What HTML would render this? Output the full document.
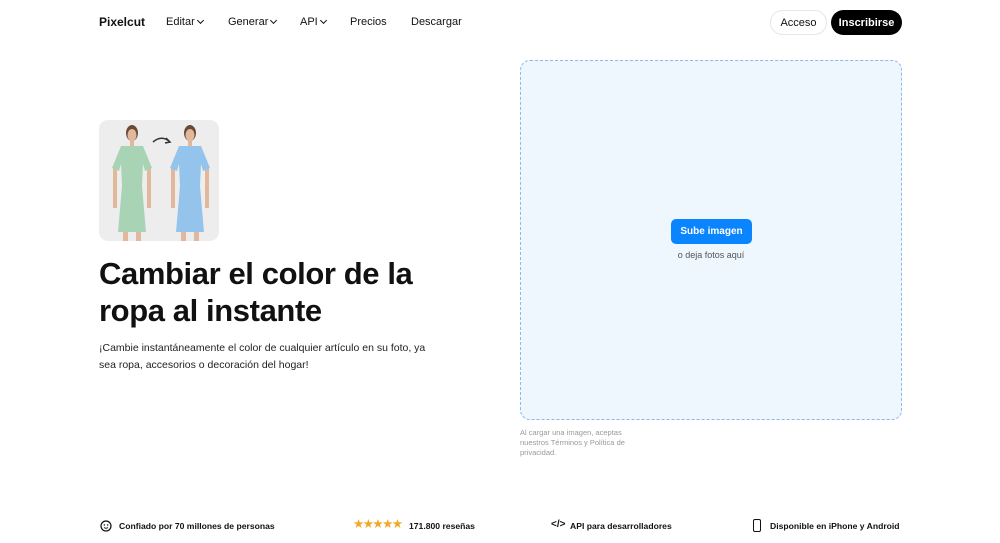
<!DOCTYPE html>
<html><head><meta charset="utf-8"><style>
*{margin:0;padding:0;box-sizing:border-box}
body{width:1000px;height:543px;background:#fff;font-family:"Liberation Sans",sans-serif;color:#111;position:relative;overflow:hidden}
.a{position:absolute;white-space:nowrap}
.nav{font-size:11px;color:#111}
.chev{display:inline-block;width:5px;height:5px;border-right:1px solid #111;border-bottom:1px solid #111;transform:rotate(45deg);margin-left:3px;position:relative;top:-2px}
.ft{font-size:8.6px;font-weight:bold;top:521px}
.btn{display:flex;align-items:center;justify-content:center}
</style></head><body>
<div class="a" style="left:99px;top:15px;font-size:12px;font-weight:bold">Pixelcut</div>
<div class="a nav" style="left:166px;top:16px">Editar<span class="chev"></span></div>
<div class="a nav" style="left:228px;top:16px">Generar<span class="chev"></span></div>
<div class="a nav" style="left:300px;top:16px">API<span class="chev"></span></div>
<div class="a nav" style="left:350px;top:16px">Precios</div>
<div class="a nav" style="left:411px;top:16px">Descargar</div>
<div class="a btn" style="left:770px;top:10px;width:57px;height:25px;border:1px solid #e6e6e6;border-radius:13px;font-size:11px">Acceso</div>
<div class="a btn" style="left:831px;top:10px;width:71px;height:25px;background:#000;color:#fff;border-radius:13px;font-size:11px;font-weight:bold">Inscribirse</div>

<div class="a" style="left:99px;top:120px;width:120px;height:121px;background:#ededed;border-radius:9px;overflow:hidden">
<svg width="120" height="121" viewBox="0 0 120 121">
<g>
<ellipse cx="33" cy="13" rx="6" ry="8" fill="#6b4a35"/><ellipse cx="33" cy="15" rx="4.5" ry="6" fill="#e2b89c"/>
<rect x="31" y="20" width="4" height="6" fill="#e2b89c"/>
<rect x="14" y="48" width="4" height="40" fill="#e2b89c"/><rect x="48" y="48" width="4" height="40" fill="#e2b89c"/>
<rect x="24" y="110" width="5" height="11" fill="#e2b89c"/><rect x="37" y="110" width="5" height="11" fill="#e2b89c"/>
<path d="M22 26 L44 26 L53 48 L46 51 L44 44 L43 66 L47 112 L19 112 L23 66 L22 44 L20 51 L13 48 Z" fill="#a8d3b5"/>
</g>
<g transform="translate(58,0)">
<ellipse cx="33" cy="13" rx="6" ry="8" fill="#6b4a35"/><ellipse cx="33" cy="15" rx="4.5" ry="6" fill="#e2b89c"/>
<rect x="31" y="20" width="4" height="6" fill="#e2b89c"/>
<rect x="14" y="48" width="4" height="40" fill="#e2b89c"/><rect x="48" y="48" width="4" height="40" fill="#e2b89c"/>
<rect x="24" y="110" width="5" height="11" fill="#e2b89c"/><rect x="37" y="110" width="5" height="11" fill="#e2b89c"/>
<path d="M22 26 L44 26 L53 48 L46 51 L44 44 L43 66 L47 112 L19 112 L23 66 L22 44 L20 51 L13 48 Z" fill="#94c3ec"/>
</g>
<path d="M54 22 Q62 15 70 21" stroke="#333" stroke-width="1.5" fill="none"/><path d="M67 18 L71 22 L66 23" stroke="#333" stroke-width="1.5" fill="none"/>
</svg></div>

<div class="a" style="left:99px;top:255px;font-size:31px;font-weight:bold;line-height:37px;letter-spacing:-0.4px">Cambiar el color de la<br>ropa al instante</div>
<div class="a" style="left:99px;top:340px;font-size:10.5px;line-height:17px;color:#222">¡Cambie instantáneamente el color de cualquier artículo en su foto, ya<br>sea ropa, accesorios o decoración del hogar!</div>

<div class="a" style="left:520px;top:60px;width:382px;height:360px;background:#eef6fe;border:1px dashed #8fb8e6;border-radius:10px"></div>
<div class="a btn" style="left:671px;top:219px;width:81px;height:25px;background:#0a84ff;border-radius:5px;color:#fff;font-size:10px;font-weight:bold">Sube imagen</div>
<div class="a" style="left:520px;width:382px;top:250px;text-align:center;font-size:9px;color:#555">o deja fotos aquí</div>
<div class="a" style="left:520px;top:428px;font-size:7.5px;line-height:10px;color:#999">Al cargar una imagen, aceptas<br>nuestros Términos y Política de<br>privacidad.</div>

<svg class="a" style="left:100px;top:520px" width="12" height="12" viewBox="0 0 12 12"><circle cx="6" cy="6" r="5" fill="none" stroke="#111" stroke-width="1.2"/><circle cx="4.3" cy="5" r=".7"/><circle cx="7.7" cy="5" r=".7"/><path d="M4 7.5 Q6 9 8 7.5" stroke="#111" fill="none"/></svg>
<div class="a ft" style="left:119px">Confiado por 70 millones de personas</div>
<div class="a" style="left:353px;top:517px;font-size:12.5px;line-height:14px;color:#f5a623;letter-spacing:-1.5px">★★★★★</div>
<div class="a ft" style="left:409px">171.800 reseñas</div>
<div class="a" style="left:551px;top:519px;font-size:10px;font-weight:bold;line-height:12px">&lt;/&gt;</div>
<div class="a ft" style="left:570px">API para desarrolladores</div>
<div class="a" style="left:753px;top:519px;width:8px;height:13px;border:1.5px solid #111;border-radius:2px"></div>
<div class="a ft" style="left:770px">Disponible en iPhone y Android</div>
</body></html>
